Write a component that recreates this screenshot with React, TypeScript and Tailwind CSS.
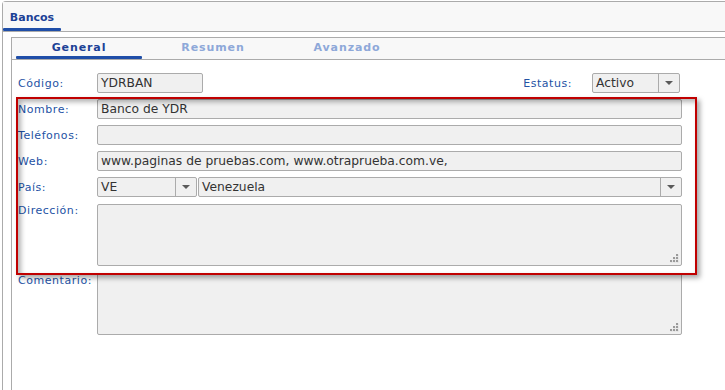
import React from 'react';

const LABEL = "w-[79px] shrink-0 text-[11px] leading-[13px] tracking-[0.55px] text-[#2452a4]";
const FIELD = "h-[20px] bg-[#f0f0f0] border border-[#ababab] rounded-[2px] text-[12.3px] text-[#333] leading-[18px]";

function Arrow() {
    return (
        <div className="w-[21px] h-full shrink-0 border-l border-[#ababab] flex items-center justify-center">
            <svg width="8" height="4" viewBox="0 0 8 4">
                <polygon points="0,0 8,0 4,4" fill="#5a5a5a" />
            </svg>
        </div>
    );
}

function Select({ value, className }: { value: string; className: string }) {
    return (
        <div className={`${FIELD} ${className} flex items-stretch`}>
            <div className="flex-1 pl-[3px] truncate">{value}</div>
            <Arrow />
        </div>
    );
}

function Grip() {
    const dots = [[7, 1], [4, 4], [7, 4], [1, 7], [4, 7], [7, 7]];
    return (
        <svg width="10" height="10" viewBox="0 0 10 10" className="absolute right-[2px] bottom-[2px]">
            {dots.map(([x, y]) => (
                <g key={`${x}-${y}`}>
                    <rect x={x + 0.5} y={y + 0.5} width="2" height="2" fill="#d8d8d8" />
                    <rect x={x} y={y} width="2" height="2" fill="#9a9a9a" />
                </g>
            ))}
        </svg>
    );
}

function TextArea({ h }: { h: string }) {
    return <div className={`relative flex-1 ${h} bg-[#f0f0f0] border border-[#ababab] rounded-[2px]`}><Grip /></div>;
}

const TABS = [
    { id: 'general', name: 'General', active: true },
    { id: 'resumen', name: 'Resumen', active: false },
    { id: 'avanzado', name: 'Avanzado', active: false },
];

export default function App() {
    return (
        <div className="relative w-[725px] h-[390px] overflow-hidden bg-white font-['DejaVu_Sans',Verdana,sans-serif]">
            <div className="ml-[2px] mt-[1px] h-[389px] border-l border-t border-[#ababab] rounded-tl-[4px] flex flex-col">
                <div className="h-[30px] shrink-0 bg-[#f8f8f8] border-b border-[#ababab] flex">
                    <div className="w-[58px] flex flex-col justify-between pt-[9px]">
                        <span className="text-center text-[11px] leading-[13px] font-bold text-[#1c4196]">Bancos</span>
                        <div className="h-[3px] bg-[#1f4ea8] rounded-[1px]" />
                    </div>
                </div>

                <div className="flex-1 pl-[8px] pt-[5px] flex">
                    <div className="flex-1 border-l border-t border-[#ababab] flex flex-col">
                        <div className="h-[22px] shrink-0 bg-[#f8f8f8] border-b border-[#ababab] flex">
                            {TABS.map((tab) => (
                                <div key={tab.id} className="w-[134px] flex flex-col justify-between pt-[3px]">
                                    <span className={`text-center text-[11px] leading-[13px] font-bold tracking-[0.9px] ${tab.active ? 'text-[#1c4196]' : 'text-[#8ea8d9]'}`}>
                                        {tab.name}
                                    </span>
                                    {tab.active ? <div className="mx-[4px] h-[3px] bg-[#1f4ea8] rounded-[1px]" /> : <div />}
                                </div>
                            ))}
                        </div>

                        <div className="pl-[6px] pt-[13px] w-[670px] flex flex-col">
                            <div className="flex items-center">
                                <span className={LABEL}>Código:</span>
                                <div className={`${FIELD} w-[106px] pl-[3px]`}>YDRBAN</div>
                                <div className="flex-1" />
                                <span className="text-[11px] leading-[13px] tracking-[0.55px] text-[#2452a4] mr-[20px]">Estatus:</span>
                                <Select value="Activo" className="w-[88px] mr-[2px]" />
                            </div>
                            <div className="flex items-center mt-[6px]">
                                <span className={LABEL}>Nombre:</span>
                                <div className={`${FIELD} flex-1 pl-[3px]`}>Banco de YDR</div>
                            </div>
                            <div className="flex items-center mt-[6px]">
                                <span className={LABEL}>Teléfonos:</span>
                                <div className={`${FIELD} flex-1`} />
                            </div>
                            <div className="flex items-center mt-[6px]">
                                <span className={LABEL}>Web:</span>
                                <div className={`${FIELD} flex-1 pl-[3px] whitespace-nowrap`}>www.paginas de pruebas.com, www.otraprueba.com.ve,</div>
                            </div>
                            <div className="flex items-center mt-[6px]">
                                <span className={LABEL}>País:</span>
                                <Select value="VE" className="w-[100px]" />
                                <Select value="Venezuela" className="flex-1 ml-[1px]" />
                            </div>
                            <div className="flex items-start mt-[7px]">
                                <span className={LABEL}>Dirección:</span>
                                <TextArea h="h-[62px]" />
                            </div>
                            <div className="flex items-start mt-[7px]">
                                <span className={`${LABEL} pt-[1px]`}>Comentario:</span>
                                <TextArea h="h-[62px]" />
                            </div>
                        </div>
                    </div>
                </div>
            </div>

            <div className="absolute left-[16px] top-[97px] w-[681px] h-[178px] border-2 border-[#c00000] pointer-events-none shadow-[3px_3px_5px_rgba(0,0,0,0.35),inset_3px_3px_5px_rgba(0,0,0,0.3)]" />
        </div>
    );
}
